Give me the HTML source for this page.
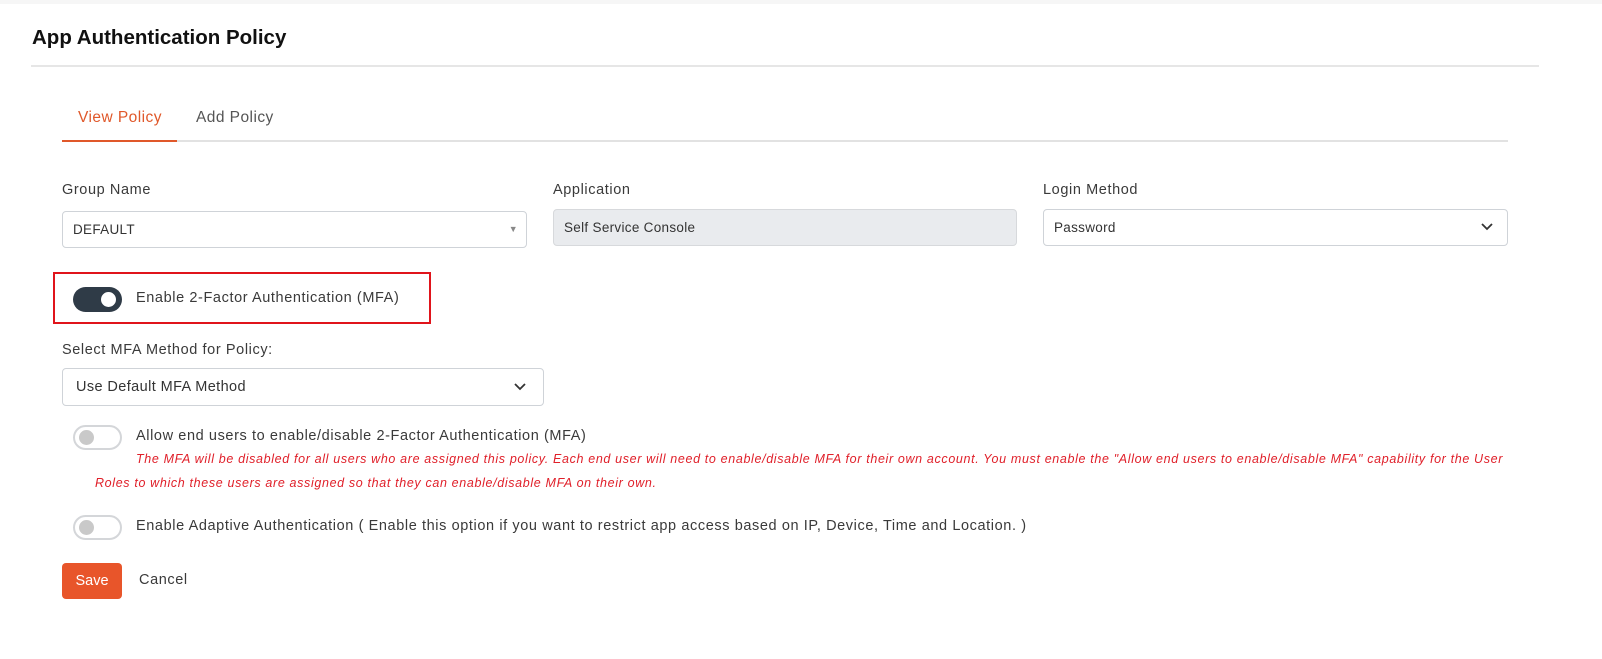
<!DOCTYPE html>
<html><head><style>
*{box-sizing:border-box;margin:0;padding:0}
body{width:1602px;height:659px;background:#fff;font-family:"Liberation Sans",sans-serif;color:#333;position:relative;overflow:hidden}
.a{position:absolute}
.t{font-size:14.5px;letter-spacing:0.6px;color:#3a3a3a;white-space:nowrap}
.inp{position:absolute;height:37px;border:1px solid #cfd3d8;border-radius:4px;font-size:13.5px;letter-spacing:0.3px;color:#333;padding-left:10px;line-height:35px}
.tog{position:absolute;width:49px;height:25px;border-radius:13px;border:2px solid #d4d6d9;background:#fff}
.tog i{position:absolute;left:4px;top:3px;width:15px;height:15px;border-radius:50%;background:#c9c9c9}
.red{font-size:12.5px;letter-spacing:0.65px;font-style:italic;color:#e0202a;white-space:nowrap}
</style></head><body>
<div class="a" style="left:0;top:0;width:1602px;height:4px;background:#f6f6f6"></div>
<div class="a" style="left:32px;top:26px;font-size:20.5px;font-weight:bold;color:#111">App Authentication Policy</div>
<div class="a" style="left:31px;top:65px;width:1508px;height:2px;background:#e6e6e6"></div>
<div class="a t" style="left:78px;top:109px;font-size:15.5px;letter-spacing:0.45px;color:#e0582a">View Policy</div>
<div class="a t" style="left:196px;top:109px;font-size:15.5px;letter-spacing:0.45px;color:#555">Add Policy</div>
<div class="a" style="left:177px;top:140px;width:1331px;height:2px;background:#e2e2e2"></div>
<div class="a" style="left:62px;top:140px;width:115px;height:2px;background:#e0582a"></div>
<div class="a t" style="left:62px;top:182px">Group Name</div>
<div class="a t" style="left:553px;top:182px">Application</div>
<div class="a t" style="left:1043px;top:182px">Login Method</div>
<div class="inp" style="left:62px;top:211px;width:465px">DEFAULT<span class="a" style="right:8px;top:0;font-size:9px;color:#888">&#9660;</span></div>
<div class="inp" style="left:553px;top:209px;width:464px;background:#e9ebee;border-color:#d7d9dc">Self Service Console</div>
<div class="inp" style="left:1043px;top:209px;width:465px">Password<svg class="a" style="right:14px;top:13px" width="12" height="8" viewBox="0 0 12 8"><path d="M1 1l5 5 5-5" stroke="#333" stroke-width="1.8" fill="none"/></svg></div>
<div class="a" style="left:53px;top:272px;width:378px;height:52px;border:2px solid #e0141b"></div>
<div class="a" style="left:73px;top:287px;width:49px;height:25px;border-radius:13px;background:#2f3b47"><i class="a" style="left:28px;top:5px;width:15px;height:15px;border-radius:50%;background:#fff"></i></div>
<div class="a t" style="left:136px;top:290px">Enable 2-Factor Authentication (MFA)</div>
<div class="a t" style="left:62px;top:342px">Select MFA Method for Policy:</div>
<div class="inp" style="left:62px;top:368px;width:482px;height:38px;font-size:14.5px;letter-spacing:0.4px;padding-left:13px;line-height:36px">Use Default MFA Method<svg class="a" style="right:17px;top:14px" width="12" height="8" viewBox="0 0 12 8"><path d="M1 1l5 5 5-5" stroke="#333" stroke-width="1.8" fill="none"/></svg></div>
<div class="tog" style="left:73px;top:425px"><i></i></div>
<div class="a t" style="left:136px;top:428px">Allow end users to enable/disable 2-Factor Authentication (MFA)</div>
<div class="a red" style="left:136px;top:452px">The MFA will be disabled for all users who are assigned this policy. Each end user will need to enable/disable MFA for their own account. You must enable the "Allow end users to enable/disable MFA" capability for the User</div>
<div class="a red" style="left:95px;top:476px">Roles to which these users are assigned so that they can enable/disable MFA on their own.</div>
<div class="tog" style="left:73px;top:515px"><i></i></div>
<div class="a t" style="left:136px;top:518px">Enable Adaptive Authentication ( Enable this option if you want to restrict app access based on IP, Device, Time and Location. )</div>
<div class="a" style="left:62px;top:563px;width:60px;height:36px;border-radius:4px;background:#e8552a;color:#fff;font-size:14.5px;text-align:center;line-height:36px">Save</div>
<div class="a t" style="left:139px;top:572px">Cancel</div>
</body></html>
